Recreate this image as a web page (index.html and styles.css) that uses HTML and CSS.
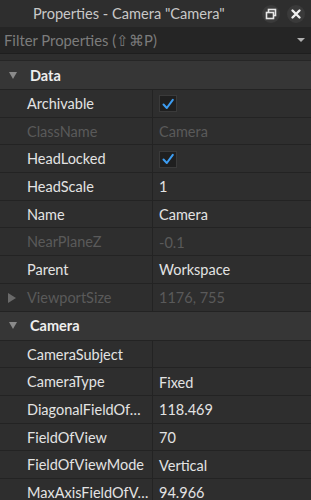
FILE: index.html
```html
<!DOCTYPE html>
<html lang="en">
<head>
  <meta charset="UTF-8" />
  <meta name="viewport" content="width=device-width, initial-scale=1.0"/>
  <title>Properties</title>
  <link rel="stylesheet" href="styles.css">
</head>
<body>
  <!-- Title bar -->
  <div class="titlebar">
    <span class="title">Properties - Camera "Camera"</span>
    <div class="title-buttons">
      <span class="title-btn">
        <svg width="12" height="12" viewBox="0 0 12 12"><rect x="3.5" y="1.5" width="7" height="6" fill="none" stroke="#e6e6e6" stroke-width="1.6"/><rect x="1.5" y="4.5" width="7" height="6" fill="#3a3a3a" stroke="#e6e6e6" stroke-width="1.6"/></svg>
      </span>
      <span class="title-btn">
        <svg width="12" height="12" viewBox="0 0 12 12"><path d="M2.5 2.5 L9.5 9.5 M9.5 2.5 L2.5 9.5" stroke="#f0f0f0" stroke-width="2.4" stroke-linecap="round"/></svg>
      </span>
    </div>
  </div>

  <!-- Filter -->
  <div class="filter">
    <span class="filter-text">Filter Properties (&#8679;&#8984;P)</span>
    <span class="filter-arrow"></span>
  </div>

  <div class="list">
    <div class="group"><span class="tri down"></span>Data</div>
    <div class="row"><div class="key">Archivable</div><div class="val"><span class="check"><svg width="14" height="14" viewBox="0 0 14 14"><path d="M2.5 7.5 L5.8 11 L11.8 2.8" fill="none" stroke="#3d9df2" stroke-width="2" stroke-linecap="round" stroke-linejoin="round"/></svg></span></div></div>
    <div class="row dim"><div class="key">ClassName</div><div class="val">Camera</div></div>
    <div class="row"><div class="key">HeadLocked</div><div class="val"><span class="check"><svg width="14" height="14" viewBox="0 0 14 14"><path d="M2.5 7.5 L5.8 11 L11.8 2.8" fill="none" stroke="#3d9df2" stroke-width="2" stroke-linecap="round" stroke-linejoin="round"/></svg></span></div></div>
    <div class="row"><div class="key">HeadScale</div><div class="val">1</div></div>
    <div class="row"><div class="key">Name</div><div class="val">Camera</div></div>
    <div class="row dim"><div class="key">NearPlaneZ</div><div class="val">-0.1</div></div>
    <div class="row"><div class="key">Parent</div><div class="val">Workspace</div></div>
    <div class="row dim"><div class="key"><span class="tri right"></span>ViewportSize</div><div class="val">1176, 755</div></div>
    <div class="group"><span class="tri down"></span>Camera</div>
    <div class="row"><div class="key">CameraSubject</div><div class="val"></div></div>
    <div class="row"><div class="key">CameraType</div><div class="val">Fixed</div></div>
    <div class="row"><div class="key" title="DiagonalFieldOfView">DiagonalFieldOf&hellip;</div><div class="val">118.469</div></div>
    <div class="row"><div class="key">FieldOfView</div><div class="val">70</div></div>
    <div class="row"><div class="key">FieldOfViewMode</div><div class="val">Vertical</div></div>
    <div class="row"><div class="key" title="MaxAxisFieldOfView">MaxAxisFieldOfV&hellip;</div><div class="val">94.966</div></div>
  </div>
</body>
</html>
```

FILE: styles.css
```css
body {
  margin: 0;
  padding: 0;
  background-color: #2e2e2e;
  font-family: 'Lato', 'Noto Sans', sans-serif;
  font-size: 14.5px;
  color: #e3e3e3;
  overflow: hidden;
}

.titlebar {
  height: 27px;
  display: flex;
  align-items: center;
  background-color: #2e2e2e;
  padding-left: 33px;
  padding-right: 6px;
}

.title {
  flex: 1;
  font-size: 14.6px;
  color: #c8c8c8;
}

.title-buttons {
  display: flex;
  gap: 7px;
}

.title-btn {
  width: 18px;
  height: 18px;
  border-radius: 50%;
  background-color: #3a3a3a;
  display: flex;
  align-items: center;
  justify-content: center;
}

.filter {
  height: 26px;
  background-color: #252525;
  display: flex;
  align-items: center;
  padding: 0 6px 0 4px;
  border-bottom: 1px solid #1e1e1e;
}

.filter-text {
  flex: 1;
  color: #7c7c7c;
  font-size: 14.8px;
}

.filter-arrow {
  width: 0;
  height: 0;
  border-left: 4px solid transparent;
  border-right: 4px solid transparent;
  border-top: 4px solid #b0b0b0;
}

.list {
  margin-top: 6px;
  border-top: 1px solid #262626;
}

.group {
  height: 29px;
  box-sizing: border-box;
  background-color: #363636;
  border-bottom: 1px solid #232323;
  display: flex;
  align-items: center;
  font-weight: bold;
  color: #eeeeee;
  padding-left: 9px;
}

.group .tri {
  margin-right: 13px;
}

.row {
  height: 27.7px;
  box-sizing: border-box;
  display: flex;
  border-bottom: 1px solid #232323;
}

.key {
  width: 153px;
  box-sizing: border-box;
  padding-left: 27px;
  padding-right: 5px;
  padding-top: 1px;
  line-height: 26.7px;
  border-right: 1px solid #232323;
  white-space: nowrap;
  position: relative;
}

.val {
  flex: 1;
  padding-left: 6px;
  padding-top: 1px;
  display: flex;
  align-items: center;
}

.row.dim .key,
.row.dim .val {
  color: #5a5a5a;
}

.tri {
  display: inline-block;
  width: 0;
  height: 0;
}

.tri.down {
  border-left: 4.5px solid transparent;
  border-right: 4.5px solid transparent;
  border-top: 7px solid #8a8a8a;
}

.tri.right {
  position: absolute;
  left: 8px;
  top: 9px;
  border-top: 5px solid transparent;
  border-bottom: 5px solid transparent;
  border-left: 8px solid #6a6a6a;
}

.check {
  width: 18px;
  height: 17px;
  box-sizing: border-box;
  background-color: #1f1f1f;
  border: 1px solid #3a3a3a;
  display: flex;
  align-items: center;
  justify-content: center;
}
```
